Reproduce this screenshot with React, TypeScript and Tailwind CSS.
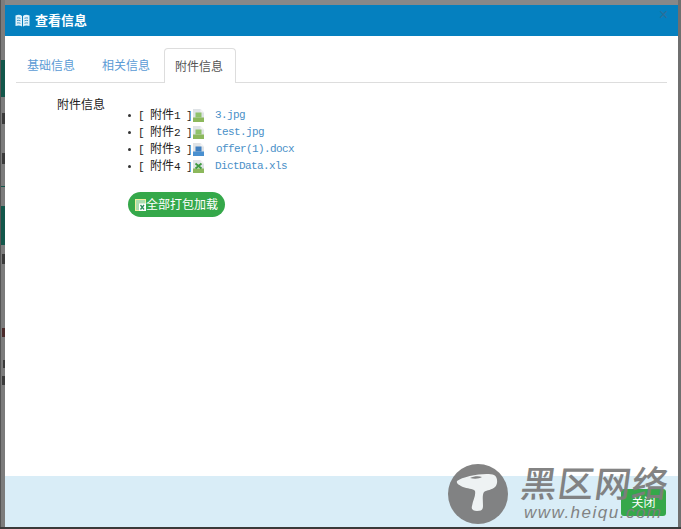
const cjk = "font-['Liberation_Sans','Noto_Sans_CJK_SC',sans-serif]";
const mono = "font-['Liberation_Mono','Noto_Sans_CJK_SC',monospace]";

const attachments = [
  { label: "附件", num: "1", name: "3.jpg", kind: "image", gap: "ml-[11px]" },
  { label: "附件", num: "2", name: "test.jpg", kind: "image", gap: "ml-3" },
  { label: "附件", num: "3", name: "offer(1).docx", kind: "word", gap: "ml-3" },
  { label: "附件", num: "4", name: "DictData.xls", kind: "excel", gap: "ml-[11px]" },
];

function FileIcon({ kind }: { kind: string }) {
  const band = kind === "word" ? "#4a90d0" : "#8cb85c";
  const mark = kind === "word" ? "#3f7fc0" : kind === "excel" ? "#3f9a3f" : "#8fc26a";
  return (
    <svg width="11" height="13" viewBox="0 0 11 13" className="shrink-0">
      <path d="M0 0h7.5L11 3.5V13H0z" fill="#dfe3e6" />
      <path d="M7.5 0L11 3.5H7.5z" fill="#f4f4f4" />
      <rect x="0" y="8.5" width="11" height="4.5" fill={band} />
      {kind === "excel" ? (
        <path d="M2.5 3.5l6 5M8.5 3.5l-6 5" stroke={mark} strokeWidth="1.8" />
      ) : (
        <rect x="2.5" y="3.5" width="6" height="5" fill={mark} />
      )}
    </svg>
  );
}

function BookIcon() {
  return (
    <svg width="15" height="13" viewBox="0 0 15 13" className="shrink-0">
      <path d="M0.5 1.5C3 0.5 5.5 0.7 7 2v10.5C5.5 11.3 3 11.1 0.5 12z" fill="#dff1fa" />
      <path d="M14.5 1.5C12 0.5 9.5 0.7 8 2v10.5c1.5-1.2 4-1.4 6.5-.5z" fill="#dff1fa" />
      <path
        d="M2 4c1-.3 2.500-.2 3.500.3M2 6.500c1-.3 2.500-.2 3.500.3M2 9c1-.3 2.500-.2 3.500.3M13 4c-1-.3-2.500-.2-3.500.3M13 6.500c-1-.3-2.500-.2-3.500.3M13 9c-1-.3-2.500-.2-3.500.3"
        stroke="#3f97c8"
        strokeWidth="1"
        fill="none"
      />
    </svg>
  );
}

function Watermark() {
  return (
    <div className="pointer-events-none absolute right-[9px] bottom-[3px] flex items-start opacity-95">
      <svg width="60" height="60" viewBox="0 0 60 60">
        <circle cx="30" cy="30" r="30" fill="#7d7d7d" />
        <path
          d="M9 17c6-5 30-9 37-6 4 2 4 9 1 12-3 3-8 3-11 5-2 3-1 9-1 14 0 4-2 5-6 5-4 0-6-2-5-5 1-6 4-10 3-15-2-3-8-2-12-4-3-2-7-3-6-6z"
          fill="#f0f3f3"
        />
        <path d="M22 14c4-2 9-2 12-1-3 2-8 2-12 1z" fill="#7d7d7d" />
      </svg>
      <div className="ml-[13px] flex flex-col">
        <span className={`${cjk} text-[36px] leading-[41px] tracking-[1px] skew-x-[-8deg] font-medium text-[#7d7d7d]`}>
          黑区网络
        </span>
        <span className="ml-[3px] font-['Liberation_Sans',sans-serif] text-[17px] leading-[15px] italic tracking-[1.5px] text-[#7d7d7d]">
          www.heiqu.com
        </span>
      </div>
    </div>
  );
}

export default function App() {
  return (
    <div className="flex h-[529px] w-[681px] overflow-hidden border-b-2 border-[#3a3a3a] bg-[#6f6f6f]">
      {/* page behind the dialog */}
      <div className="flex w-[5px] shrink-0 flex-col border-l border-[#555] bg-[#7c7c7c]">
        <div className="mt-[60px] h-[37px] bg-[#12564a]" />
        <div className="mt-4 h-[11px] w-[3px] self-end bg-[#3a3a3a]" />
        <div className="mt-[29px] h-[11px] w-[3px] self-end bg-[#3a3a3a]" />
        <div className="mt-[22px] h-px bg-[#12564a]" />
        <div className="mt-[19px] h-[39px] bg-[#12564a]" />
        <div className="mt-[9px] h-[10px] w-[3px] self-end bg-[#3a3a3a]" />
        <div className="mt-[64px] h-[9px] w-[3px] self-end bg-[#4a2a2a]" />
        <div className="mt-[23px] h-2 w-[2px] self-end bg-[#3a3a3a]" />
        <div className="mt-[8px] h-[9px] w-[3px] self-end bg-[#3a3a3a]" />
      </div>

      <div className={`${cjk} relative flex w-[673px] flex-col border-t-[5px] border-[#888] bg-white text-xs text-[#333]`}>
        <div className="flex h-[31px] shrink-0 items-center bg-[#0580bf] pl-[10px] pr-[10px]">
          <BookIcon />
          <span className="ml-[5px] text-[13px] font-bold text-white">查看信息</span>
          <span className="ml-auto -mt-[12px] text-base leading-none text-[#2a6f9a]">×</span>
        </div>

        <div className="flex-1 px-[11px] pt-3">
          <div className="flex h-[35px] border-b border-[#ddd]">
            <span className="px-[11px] pt-[10px] text-[#5b9bd5]">基础信息</span>
            <span className="ml-[5px] px-[11px] pt-[10px] text-[#5b9bd5]">相关信息</span>
            <span className="ml-[3px] -mb-px h-[35px] w-[72px] rounded-t border border-b-0 border-[#ddd] bg-white pl-[10px] pt-[10px] text-[#555]">
              附件信息
            </span>
          </div>

          <div className="flex">
            <span className="ml-[41px] mt-[14px] text-[#222]">附件信息</span>
            <div className="ml-[23px] pt-[24px]">
              <ul className="flex flex-col">
                {attachments.map((file) => (
                  <li key={file.num} className="flex h-[17px] items-center text-[#222]">
                    <span className="mr-[7px] h-[3px] w-[3px] rounded-full bg-[#333]" />
                    <span className={`${mono} w-[55px] whitespace-pre text-[11px] tracking-[-0.6px]`}>
                      {"[ "}
                      <span className={`${cjk} text-xs tracking-normal`}>{file.label}</span>
                      {file.num + " ]"}
                    </span>
                    <FileIcon kind={file.kind} />
                    <span className={`${file.gap} ${mono} text-[11px] tracking-[-0.6px] text-[#4a90c8]`}>
                      {file.name}
                    </span>
                  </li>
                ))}
              </ul>
              <button className="mt-[17px] flex h-[25px] w-[97px] items-center rounded-full bg-[#35a84a] pl-[7px] text-[12px] text-white">
                <svg width="11" height="12" viewBox="0 0 11 12" className="shrink-0">
                  <rect x="0.5" y="0.5" width="10" height="11" fill="#a9dcb0" stroke="#f0eea0" />
                  <rect x="4" y="4.500" width="7" height="7.500" fill="#fff" />
                  <path d="M5.500 6l3.500 4.500M9 6l-3.500 4.500" stroke="#2f8f5f" strokeWidth="1.300" />
                </svg>
                全部打包加载
              </button>
            </div>
          </div>
        </div>

        <div className="flex h-[51px] shrink-0 items-start justify-end bg-[#d9edf7] pr-[12px] pt-[13px]">
          <button className="h-[27px] w-[45px] rounded-[3px] bg-[#35a84a] text-white">关闭</button>
        </div>

        <Watermark />
      </div>
    </div>
  );
}
